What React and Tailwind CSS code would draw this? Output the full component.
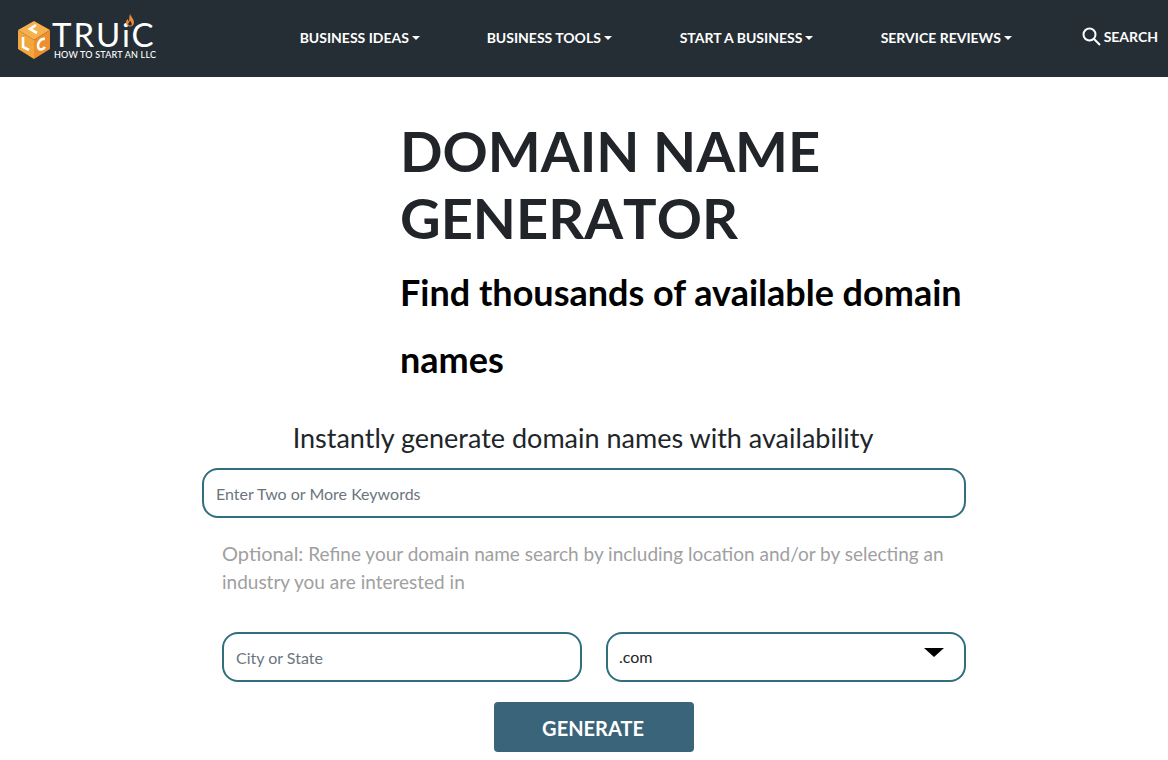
const navItems = [
  { label: "BUSINESS IDEAS", width: "w-[187px]" },
  { label: "BUSINESS TOOLS", width: "w-[193px]" },
  { label: "START A BUSINESS", width: "w-[201px]" },
  { label: "SERVICE REVIEWS", width: "w-[201px]" },
];

function Logo() {
  return (
    <div className="flex items-start">
      <svg width="34" height="40" viewBox="0 0 34 40" className="mt-[20px] ml-[17px]">
        <polygon points="17,1 33,10 17,20 1,10" fill="#f7b04e" />
        <polygon points="1,10 17,20 17,39 1,29" fill="#f2a63c" />
        <polygon points="33,10 17,20 17,39 33,29" fill="#ec8f2c" />
        <path d="M19 5 L13 9 L20 13" stroke="#fff" strokeWidth="2.6" fill="none" />
        <path d="M6 17 L6 27 L12 30" stroke="#fff" strokeWidth="2.6" fill="none" />
        <path d="M28 19 C24 18 21 22 21 26 C21 30 25 31 28 27" stroke="#fff" strokeWidth="2.6" fill="none" />
      </svg>
      <div className="relative ml-[3px] mt-[21px] text-white">
        <div className="text-[33px] leading-[27px] tracking-[2px] font-normal ml-[-2px]">TRUiC</div>
        <div className="text-[9px] leading-[10px] mt-[2px] tracking-[0.2px] font-medium">HOW TO START AN LLC</div>
        <svg width="10" height="13" viewBox="0 0 10 13" className="absolute left-[71px] top-[-7px]">
          <path d="M5 0 C6 3 9 5 9 8.5 C9 11 7 12.5 5 12.5 C3 12.5 1 11 1 8.5 C1 7 2 5.5 2.5 5 C3 6.5 3.5 7 4 7 C4.5 5 4 3 5 0 Z" fill="#e98a3a" />
          <path d="M5 6.5 C6 8 6.8 9 6.8 10 C6.8 11 6 11.6 5 11.6 C4 11.6 3.2 11 3.2 10 C3.2 9 4.5 8 5 6.5 Z" fill="#262e35" />
        </svg>
      </div>
    </div>
  );
}

export default function App() {
  return (
    <div className="min-h-screen bg-white font-['Lato','Liberation_Sans',sans-serif] text-[#212529]">
      <header className="h-[77px] bg-[#262e35] flex items-start justify-between">
        <Logo />
        <div className="flex items-start">
          <nav className="flex mt-[29px]">
            {navItems.map((item) => (
              <a key={item.label} className={`${item.width} flex items-center text-white text-sm font-bold leading-[18px]`}>
                {item.label}
                <span className="ml-[3px] border-x-[4px] border-x-transparent border-t-[4px] border-t-white" />
              </a>
            ))}
          </nav>
          <div className="flex items-center mt-[27px] mr-[10px] text-white">
            <svg width="19" height="19" viewBox="0 0 19 19" fill="none" stroke="currentColor" strokeWidth="2" className="mr-[3px]">
              <circle cx="7.5" cy="7.5" r="6" />
              <path d="M12 12 L18 18" />
            </svg>
            <span className="text-sm font-bold leading-[18px]">SEARCH</span>
          </div>
        </div>
      </header>

      <main>
        <div className="pl-[400px] pt-[40px]">
          <h1 className="text-[56px] leading-[67px] font-bold w-[560px] [font-kerning:none]">DOMAIN NAME GENERATOR</h1>
          <h2 className="text-[36px] leading-[67px] font-bold text-black mt-[8px] w-[600px]">Find thousands of available domain names</h2>
        </div>

        <p className="text-center text-[27px] leading-[34px] mt-[28px] mr-[2px]">Instantly generate domain names with availability</p>

        <div className="ml-[202px] w-[764px] mt-[13px]">
          <div className="h-[50px] border-2 border-[#316e7e] rounded-[16px] px-3 pt-[1px] flex items-center">
            <input className="w-full text-base outline-none placeholder:text-[#6c757d]" placeholder="Enter Two or More Keywords" />
          </div>
        </div>

        <p className="ml-[222px] w-[740px] mt-[21px] text-[19px] leading-[28px] text-[#a0a0a0]">
          <span className="text-[20px]">Optional:</span> Refine your domain name search by including location and/or by selecting an industry you are interested in
        </p>

        <div className="ml-[222px] w-[744px] mt-[36px] flex gap-[24px]">
          <div className="w-[360px] h-[50px] border-2 border-[#316e7e] rounded-[16px] px-3 pt-[1px] flex items-center">
            <input className="w-full text-base outline-none placeholder:text-[#6c757d]" placeholder="City or State" />
          </div>
          <div className="w-[360px] h-[50px] border-2 border-[#316e7e] rounded-[16px] pl-[11px] pr-[20px] flex items-center justify-between">
            <span className="text-base">.com</span>
            <span className="mb-[10px] border-x-[10px] border-x-transparent border-t-[9px] border-t-black" />
          </div>
        </div>

        <div className="ml-[494px] mt-[20px]">
          <button className="w-[200px] h-[50px] bg-[#3a6479] rounded-[4px] text-white text-[20px] font-bold pr-[2px] pt-[1px]">GENERATE</button>
        </div>
      </main>
    </div>
  );
}
